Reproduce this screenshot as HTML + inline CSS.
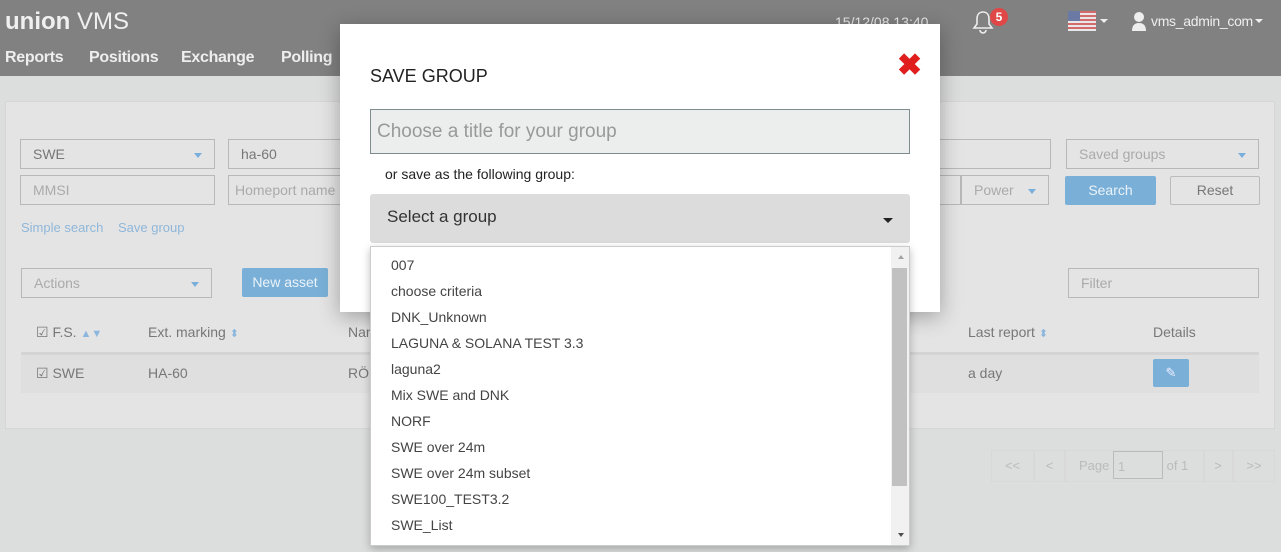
<!DOCTYPE html>
<html><head><meta charset="utf-8"><style>
*{box-sizing:border-box;margin:0;padding:0}
body{width:1281px;height:552px;overflow:hidden;background:#dcdddd;font-family:"Liberation Sans",sans-serif;position:relative;color:#555}
.a{position:absolute}
.hdr{left:0;top:0;width:1281px;height:76px;background:#818181}
.nav{color:#eee;font-size:16px;font-weight:bold;top:49px;letter-spacing:-0.3px}
.panel{left:5px;top:101px;width:1270px;height:328px;background:#e4e4e4;border:1px solid #d6d6d6}
.inp{border:1px solid #b8b8b8;height:30px;font-size:14px;color:#aaa;padding:6px 12px}
.car{position:absolute;right:12px;top:13px;border-left:4px solid transparent;border-right:4px solid transparent;border-top:5px solid #7aaedb}
.lnk{color:#8fb7da;font-size:13px}
.th{font-size:14px;color:#777;top:324px}
.sort{color:#8cb6de;font-size:11px}
.modal{left:340px;top:24px;width:600px;height:288px;background:#fff;box-shadow:0 5px 20px rgba(0,0,0,.3)}
.list{left:370px;top:246px;width:540px;height:300px;background:#fff;border:1px solid #ccc;box-shadow:0 3px 8px rgba(0,0,0,.25)}
.it{position:absolute;left:20px;font-size:14px;color:#444}
.pg{border:1px solid #d8d8d8;height:32px;font-size:13px;color:#bbb;text-align:center;line-height:30px}
</style></head><body>
<div class="a hdr"></div>
<div class="a" style="left:5px;top:8px;font-size:24px;color:#f0f0f0"><b>union</b> VMS</div>
<div class="a nav" style="left:5px">Reports</div>
<div class="a nav" style="left:89px">Positions</div>
<div class="a nav" style="left:181px">Exchange</div>
<div class="a nav" style="left:281px">Polling</div>
<div class="a" style="left:835px;top:14px;font-size:14px;color:#e8e8e8">15/12/08 13:40</div>
<svg class="a" style="left:972px;top:10px" width="22" height="24" viewBox="0 0 22 24"><path d="M11 2c-4 0-6 3-6 7v5l-3 4h18l-3-4V9c0-4-2-7-6-7zM8 20a3 3 0 0 0 6 0" fill="none" stroke="#eee" stroke-width="1.6"/></svg>
<div class="a" style="left:990px;top:8px;width:18px;height:18px;border-radius:9px;background:#e04848;color:#fff;font-size:12px;font-weight:bold;text-align:center;line-height:18px">5</div>
<svg class="a" style="left:1068px;top:11px" width="28" height="20"><rect width="28" height="20" fill="#e8e8e8"/><g fill="#d46a6a"><rect y="0" width="28" height="2"/><rect y="4" width="28" height="2"/><rect y="8" width="28" height="2"/><rect y="12" width="28" height="2"/><rect y="16" width="28" height="2"/></g><rect width="12" height="10" fill="#6a7aa4"/></svg>
<div class="a" style="left:1100px;top:19px;border-left:4px solid transparent;border-right:4px solid transparent;border-top:4px solid #eee"></div>
<svg class="a" style="left:1131px;top:11px" width="16" height="20"><circle cx="8" cy="6" r="5" fill="#eee"/><path d="M1 20c0-6 3-8 7-8s7 2 7 8z" fill="#eee"/></svg>
<div class="a" style="left:1151px;top:13px;font-size:14px;color:#eee;letter-spacing:-0.3px">vms_admin_com</div>
<div class="a" style="left:1255px;top:19px;border-left:4px solid transparent;border-right:4px solid transparent;border-top:4px solid #eee"></div>

<div class="a panel"></div>
<div class="a inp" style="left:20px;top:139px;width:195px;color:#777">SWE<span class="car"></span></div>
<div class="a inp" style="left:228px;top:139px;width:120px;color:#777">ha-60</div>
<div class="a inp" style="left:20px;top:175px;width:195px">MMSI</div>
<div class="a inp" style="left:228px;top:175px;width:120px;overflow:hidden;white-space:nowrap;padding-left:6px">Homeport name</div>
<div class="a inp" style="left:935px;top:139px;width:116px"></div>
<div class="a inp" style="left:1066px;top:139px;width:193px">Saved groups<span class="car"></span></div>
<div class="a inp" style="left:935px;top:175px;width:11px"></div>
<div class="a inp" style="left:961px;top:175px;width:88px">Power<span class="car"></span></div>
<div class="a" style="left:1065px;top:176px;width:91px;height:29px;background:#7ab0d8;border-radius:2px;color:#eaf2f8;font-size:14px;text-align:center;line-height:29px">Search</div>
<div class="a" style="left:1170px;top:176px;width:90px;height:29px;border:1px solid #bbb;border-radius:2px;color:#777;font-size:14px;text-align:center;line-height:27px">Reset</div>
<div class="a lnk" style="left:21px;top:220px">Simple search</div>
<div class="a lnk" style="left:118px;top:220px">Save group</div>
<div class="a inp" style="left:21px;top:268px;width:191px">Actions<span class="car"></span></div>
<div class="a" style="left:242px;top:268px;width:86px;height:29px;background:#7ab0d8;border-radius:2px;color:#eaf2f8;font-size:14px;text-align:center;line-height:29px">New asset</div>
<div class="a inp" style="left:1068px;top:268px;width:191px">Filter</div>
<div class="a th" style="left:36px">☑ F.S. <span class="sort">▲▼</span></div>
<div class="a th" style="left:148px">Ext. marking <span class="sort">⬍</span></div>
<div class="a th" style="left:348px">Nar</div>
<div class="a th" style="left:968px">Last report <span class="sort">⬍</span></div>
<div class="a th" style="left:1153px">Details</div>
<div class="a" style="left:21px;top:352px;width:1238px;height:41px;background:#dfdfdf;border-top:3px solid #d4d4d4"></div>
<div class="a" style="left:36px;top:365px;font-size:14px;color:#777">☑ SWE</div>
<div class="a" style="left:148px;top:365px;font-size:14px;color:#777">HA-60</div>
<div class="a" style="left:348px;top:365px;font-size:14px;color:#777">RÖ</div>
<div class="a" style="left:968px;top:365px;font-size:14px;color:#777">a day</div>
<div class="a" style="left:1153px;top:359px;width:36px;height:28px;background:#7ab0d8;border-radius:2px;color:#eef;text-align:center;line-height:28px;font-size:13px">✎</div>
<div class="a pg" style="left:991px;top:450px;width:43px">&lt;&lt;</div>
<div class="a pg" style="left:1034px;top:450px;width:31px">&lt;</div>
<div class="a pg" style="left:1065px;top:450px;width:140px;text-align:left;padding-left:13px">Page <span style="display:inline-block;width:50px;height:28px;border:1px solid #bbb;vertical-align:top;padding-left:4px">1</span> of 1</div>
<div class="a pg" style="left:1203px;top:450px;width:30px">&gt;</div>
<div class="a pg" style="left:1233px;top:450px;width:42px">&gt;&gt;</div>

<div class="a modal"></div>
<div class="a" style="left:370px;top:66px;font-size:18px;color:#222">SAVE GROUP</div>
<div class="a" style="left:897px;top:50px;font-size:30px;color:#e01e1e;font-weight:bold;line-height:32px">✖</div>
<div class="a" style="left:370px;top:109px;width:540px;height:45px;background:#eceeed;border:1px solid #7f8c8d;font-size:19px;color:#999;padding:11px 6px">Choose a title for your group</div>
<div class="a" style="left:385px;top:166px;font-size:14px;color:#222">or save as the following group:</div>
<div class="a" style="left:370px;top:194px;width:540px;height:49px;background:#dcdcdc;border-radius:3px;font-size:17px;color:#333;padding:13px 17px">Select a group</div>
<div class="a" style="left:883px;top:218px;border-left:5px solid transparent;border-right:5px solid transparent;border-top:5px solid #222"></div>
<div class="a list">
<div class="it" style="top:10px">007</div>
<div class="it" style="top:36px">choose criteria</div>
<div class="it" style="top:62px">DNK_Unknown</div>
<div class="it" style="top:88px">LAGUNA &amp; SOLANA TEST 3.3</div>
<div class="it" style="top:114px">laguna2</div>
<div class="it" style="top:140px">Mix SWE and DNK</div>
<div class="it" style="top:166px">NORF</div>
<div class="it" style="top:192px">SWE over 24m</div>
<div class="it" style="top:218px">SWE over 24m subset</div>
<div class="it" style="top:244px">SWE100_TEST3.2</div>
<div class="it" style="top:270px">SWE_List</div>
<div style="position:absolute;right:0;top:0;width:18px;height:298px;background:#f1f1f1"></div>
<div style="position:absolute;right:2px;top:21px;width:15px;height:218px;background:#c1c1c1"></div>
<div style="position:absolute;right:5px;top:8px;border-left:3px solid transparent;border-right:3px solid transparent;border-bottom:4px solid #a3a3a3"></div>
<div style="position:absolute;right:5px;bottom:8px;border-left:3px solid transparent;border-right:3px solid transparent;border-top:4px solid #505050"></div>
</div>
</body></html>
